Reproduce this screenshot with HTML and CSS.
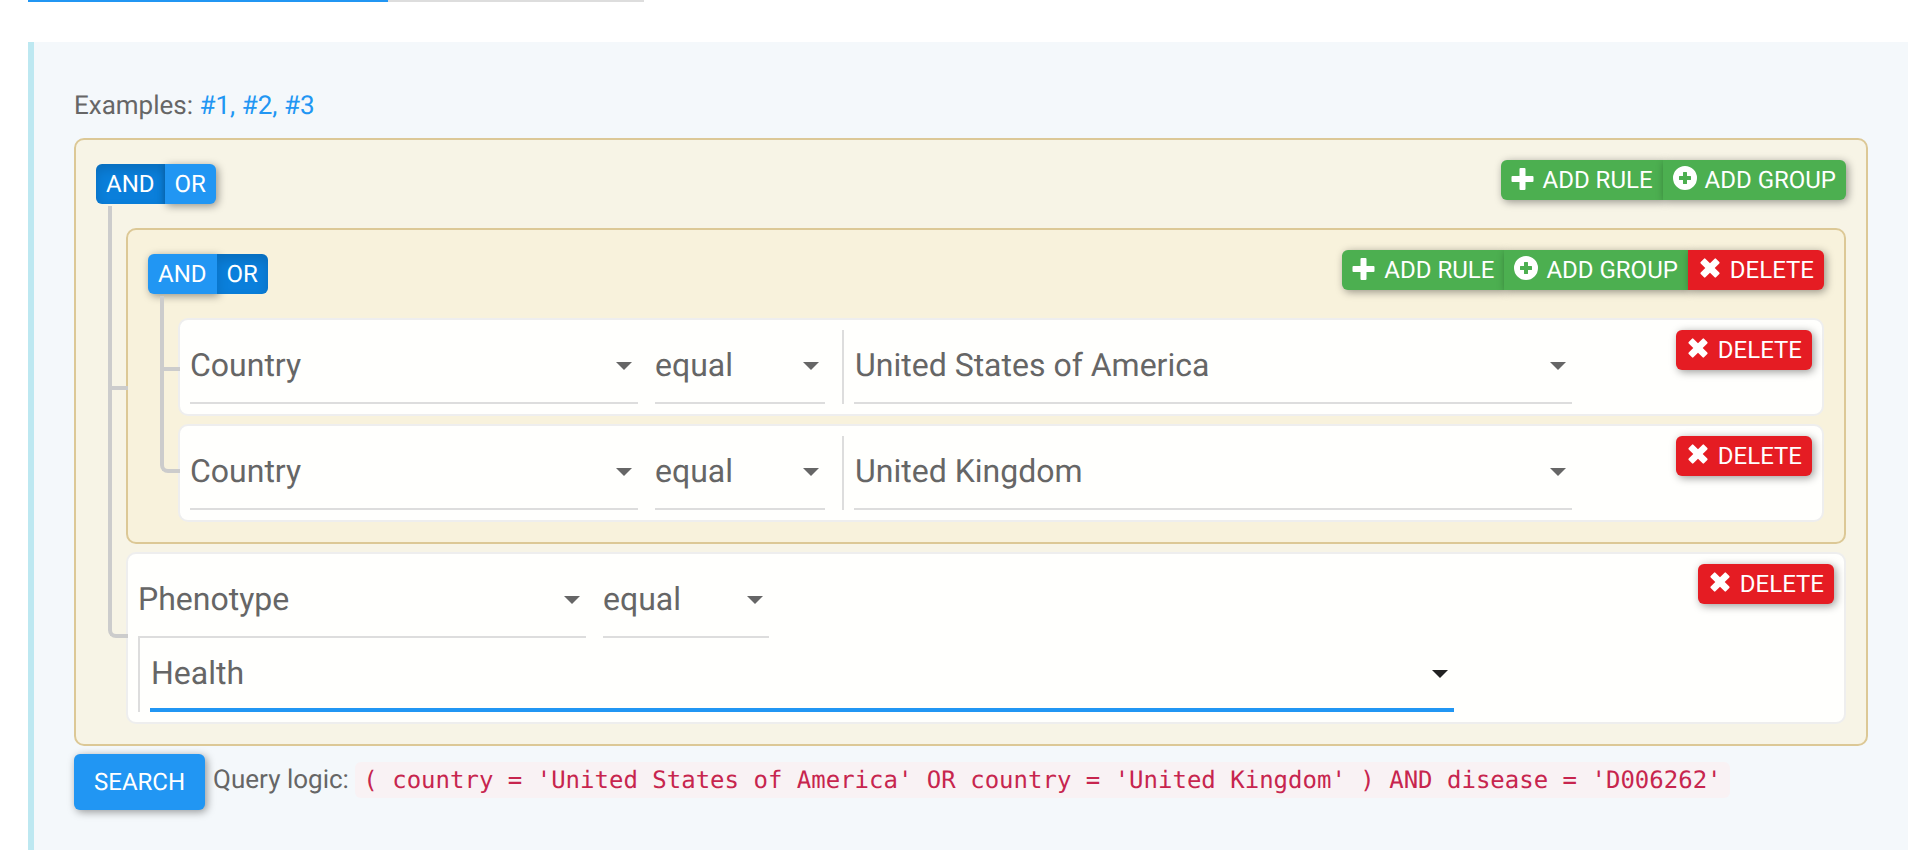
FILE: index.html
```html
<!DOCTYPE html>
<html lang="en">
<head>
<meta charset="utf-8">
<title>Query builder</title>
<link rel="stylesheet" href="styles.css">
</head>
<body>
<svg class="sprite" aria-hidden="true">
  <symbol id="plus" viewBox="0 0 24 24"><path d="M9.500 2h4q1 0 1 1v7h7q1 0 1 1v4q0 1-1 1h-7v7q0 1-1 1h-4q-1 0-1-1v-7h-7q-1 0-1-1v-4q0-1 1-1h7V3q0-1 1-1z"/></symbol>
  <symbol id="plus-circle" viewBox="0 0 24 24"><path fill-rule="evenodd" d="M12 0a12 12 0 1 1 0 24a12 12 0 0 1 0-24zM10.600 6q-.600 0-.600.600V10H6.600q-.600 0-.600.600v2.800q0 .600.600.600H10v3.400q0 .600.600.600h2.800q.600 0 .600-.600V14h3.400q.600 0 .600-.600v-2.800q0-.600-.600-.600H14V6.600q0-.600-.600-.600z"/></symbol>
  <symbol id="cross" viewBox="0 0 24 24"><path d="M6 2.700q.700-.700 1.400 0L12 7.300l4.600-4.600q.700-.700 1.400 0l3.300 3.300q.700.700 0 1.400L16.700 12l4.600 4.600q.700.700 0 1.400l-3.300 3.300q-.700.700-1.400 0L12 16.700l-4.600 4.600q-.700.700-1.400 0l-3.300-3.300q-.700-.700 0-1.400L7.300 12 2.700 7.400q-.700-.700 0-1.400z"/></symbol>
</svg>
<div class="tabs"><span class="tab tab--active"></span><span class="tab"></span></div>
<main class="panel">
  <p class="examples">Examples: <a href="#1">#1, </a><a href="#2">#2, </a><a href="#3">#3</a></p>
  <div class="group">
    <div class="group-header">
      <div class="btn-group conditions">
        <button type="button" class="btn btn--primary is-active">AND</button><button type="button" class="btn btn--primary">OR</button>
      </div>
      <div class="btn-group">
        <button type="button" class="btn btn--success"><svg class="icon"><use href="#plus"/></svg>ADD RULE</button><button type="button" class="btn btn--success"><svg class="icon"><use href="#plus-circle"/></svg>ADD GROUP</button>
      </div>
    </div>
    <ul class="rules">
      <li class="node group group--nested">
        <div class="group-header">
          <div class="btn-group conditions">
            <button type="button" class="btn btn--primary">AND</button><button type="button" class="btn btn--primary is-active">OR</button>
          </div>
          <div class="btn-group">
            <button type="button" class="btn btn--success"><svg class="icon"><use href="#plus"/></svg>ADD RULE</button><button type="button" class="btn btn--success"><svg class="icon"><use href="#plus-circle"/></svg>ADD GROUP</button><button type="button" class="btn btn--danger"><svg class="icon"><use href="#cross"/></svg>DELETE</button>
          </div>
        </div>
        <ul class="rules">
          <li class="node rule">
            <div class="fields">
              <div class="field field--filter"><select aria-label="Field"><option>Country</option></select></div>
              <div class="field field--operator"><select aria-label="Operator"><option>equal</option></select></div>
              <div class="value"><div class="field field--value"><select aria-label="Value"><option>United States of America</option></select></div></div>
            </div>
            <button type="button" class="btn btn--danger"><svg class="icon"><use href="#cross"/></svg>DELETE</button>
          </li>
          <li class="node rule">
            <div class="fields">
              <div class="field field--filter"><select aria-label="Field"><option>Country</option></select></div>
              <div class="field field--operator"><select aria-label="Operator"><option>equal</option></select></div>
              <div class="value"><div class="field field--value"><select aria-label="Value"><option>United Kingdom</option></select></div></div>
            </div>
            <button type="button" class="btn btn--danger"><svg class="icon"><use href="#cross"/></svg>DELETE</button>
          </li>
        </ul>
      </li>
      <li class="node rule">
        <div class="fields">
          <div class="field field--filter"><select aria-label="Field"><option>Phenotype</option></select></div>
          <div class="field field--operator-short"><select aria-label="Operator"><option>equal</option></select></div>
          <div class="value"><div class="field field--value-wide is-focused"><select aria-label="Value"><option>Health</option></select></div></div>
        </div>
        <button type="button" class="btn btn--danger"><svg class="icon"><use href="#cross"/></svg>DELETE</button>
      </li>
    </ul>
  </div>
  <div class="footer">
    <button type="button" class="btn btn--primary btn--search">SEARCH</button>
    <p class="logic">Query logic: <code>( country = 'United States of America' OR country = 'United Kingdom' ) AND disease = 'D006262'</code></p>
  </div>
</main>
</body>
</html>
```
FILE: styles.css
```css
*, *::before, *::after { box-sizing: border-box; }
body {
  margin: 0;
  padding: 0 20px 18px 28px;
  background: #fff;
  color: #666;
  font: 26px/48px Roboto, sans-serif;
  text-rendering: geometricPrecision;
}
p, ul { margin: 0; padding: 0; list-style: none; }
a { color: #2196f3; text-decoration: none; }
.sprite { position: absolute; width: 0; height: 0; }

.tabs { display: flex; height: 2px; margin-bottom: 40px; }
.tab { width: 256px; background: #ddd; }
.tab--active { width: 360px; background: #2196f3; }

.panel {
  padding: 40px;
  border-left: 6px solid #bde8f1;
  background: #f4f8fb;
}
.examples { margin-bottom: 8px; }

.group {
  padding: 20px;
  border: 2px solid #dcc896;
  border-radius: 10px;
  background: rgba(250, 240, 210, 0.5);
}
.group-header {
  display: flex;
  justify-content: space-between;
  align-items: flex-start;
  margin-bottom: 24px;
}
.btn-group { display: flex; }
.conditions { padding-top: 4px; }
.rules { display: flex; flex-direction: column; gap: 8px; padding-left: 30px; }
.node { position: relative; }

/* tree connectors */
.node::before, .node::after {
  content: "";
  position: absolute;
  left: -20px;
  width: 20px;
  border-left: 4px solid #ccc;
}
.node::before { top: -10px; height: calc(50% + 14px); border-bottom: 4px solid #ccc; }
.node:first-child::before { top: -24px; height: calc(50% + 28px); }
.node::after { top: 50%; bottom: -10px; width: 4px; }
.node:last-child::before { height: calc(50% + 10px); border-bottom-left-radius: 8px; }
.node:last-child::after { display: none; }

.rule {
  display: flex;
  justify-content: space-between;
  align-items: flex-start;
  gap: 16px;
  padding: 10px;
  border: 2px solid #eee;
  border-radius: 10px;
  background: #fffffd;
}
.fields { display: flex; flex-wrap: wrap; column-gap: 17px; min-width: 0; }
.value { padding-left: 10px; border-left: 2px solid #ddd; max-width: 100%; }
.field { position: relative; max-width: 100%; }
.field--filter { width: 448px; }
.field--operator { width: 170px; }
.field--operator-short { width: 166px; }
.field--value { width: 718px; }
.field--value-wide { width: 1304px; }
.field::after {
  content: "";
  position: absolute;
  top: 32px;
  right: 6px;
  border: 8px solid transparent;
  border-top-color: #666;
  border-bottom: 0;
  pointer-events: none;
}
.field.is-focused::after { border-top-color: #212121; }
select {
  display: block;
  width: 100%;
  height: 74px;
  padding: 0 0 2px;
  border: 0;
  border-bottom: 2px solid #ddd;
  border-radius: 0;
  appearance: none;
  outline: 0;
  background: transparent;
  color: #666;
  font: 32px/70px Roboto, sans-serif;
  text-rendering: inherit;
}
.value select { padding-left: 1px; }
.is-focused select { border-bottom-color: #2196f3; box-shadow: inset 0 -2px #2196f3; }

.btn {
  display: flex;
  align-items: center;
  flex: none;
  height: 40px;
  padding: 0 10px;
  border: 0;
  border-radius: 6px;
  color: #fff;
  font: 24px/40px Roboto, sans-serif;
  text-rendering: inherit;
  white-space: nowrap;
  box-shadow: 2px 2px 8px rgba(0, 0, 0, 0.4);
}
.btn-group .btn:not(:first-child) { border-top-left-radius: 0; border-bottom-left-radius: 0; }
.btn-group .btn:not(:last-child) { border-top-right-radius: 0; border-bottom-right-radius: 0; }
.btn--primary { background: #2196f3; }
.btn--primary.is-active { background: #0a7fdb; box-shadow: inset 0 6px 12px rgba(0, 0, 0, 0.14); }
.btn--success { background: #4caf50; }
.btn--danger { background: #e51c23; }
.btn--search { height: 56px; padding: 0 20px; line-height: 56px; }
.icon { flex: none; width: 24px; height: 24px; margin-right: 8px; margin-bottom: 4px; fill: currentColor; }

.footer { display: flex; align-items: flex-start; gap: 8px; margin-top: 8px; }
.logic { line-height: 52px; }
code {
  padding: 4px 8px;
  border-radius: 6px;
  background: #f9f2f4;
  color: #c7254e;
  font: 24px/28px "DejaVu Sans Mono", monospace;
}
```
